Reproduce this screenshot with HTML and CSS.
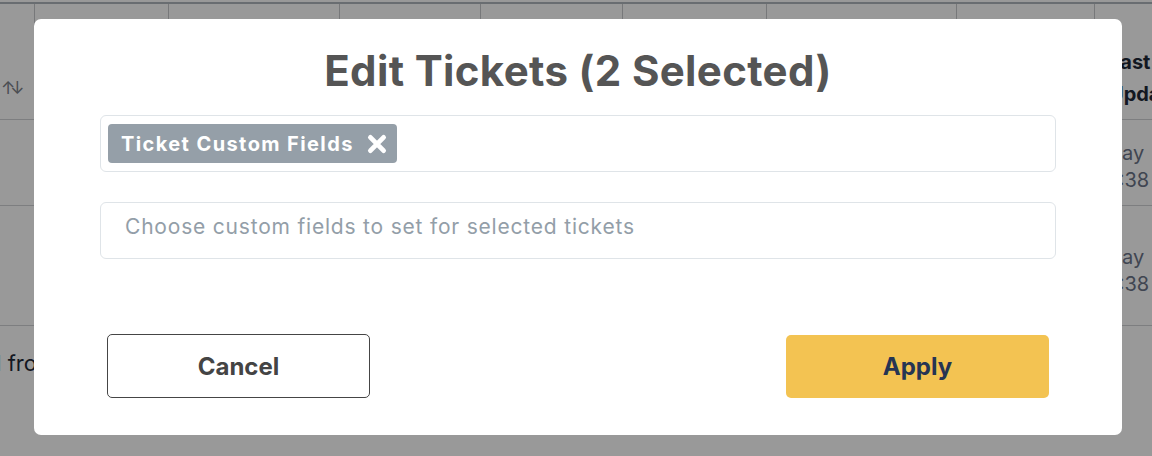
FILE: index.html
```html
<!DOCTYPE html>
<html>
<head>
<meta charset="utf-8">
<link rel="stylesheet" href="styles.css">
</head>
<body>
<div class="page">
  <div class="table">
    <div class="row head">
      <div class="cell c0"><span class="sort">↑↓</span></div>
      <div class="cell c1"></div>
      <div class="cell c2"></div>
      <div class="cell c3"></div>
      <div class="cell c4"></div>
      <div class="cell c5"></div>
      <div class="cell c6"></div>
      <div class="cell c7"></div>
      <div class="cell c8"><span class="th">Last<br>Updated</span></div>
    </div>
    <div class="row body r1">
      <div class="cell wide"></div>
      <div class="cell c8"><span class="td"><span class="m">May</span><br>10:38</span></div>
    </div>
    <div class="row body r2">
      <div class="cell wide"></div>
      <div class="cell c8"><span class="td"><span class="m">May</span><br>10:38</span></div>
    </div>
  </div>
  <div class="footer"><span class="foot-text">d from</span></div>
</div>

<div class="overlay">
  <div class="modal">
    <h1 class="title">Edit Tickets (2 Selected)</h1>
    <div class="field chips">
      <span class="chip">Ticket Custom Fields
        <svg class="chip-x" viewBox="0 0 20 20" width="22" height="22"><path d="M4 4 L16 16 M16 4 L4 16" stroke="#fff" stroke-width="4.4" stroke-linecap="round"/></svg>
      </span>
    </div>
    <div class="field select">
      <span class="placeholder">Choose custom fields to set for selected tickets</span>
    </div>
    <div class="actions">
      <button class="btn cancel">Cancel</button>
      <button class="btn apply">Apply</button>
    </div>
  </div>
</div>
</body>
</html>
```

FILE: styles.css
```css
* { box-sizing: border-box; }
html, body { margin: 0; padding: 0; }
body {
  width: 1152px;
  height: 456px;
  overflow: hidden;
  background: #ffffff;
  font-family: "Inter", "Lato", "Liberation Sans", sans-serif;
}

.page { padding-top: 2px; }

.table { border-top: 2px solid #b0b6bd; }

.row { display: flex; }
.row.head { height: 116px; border-bottom: 1px solid #d0d3d6; }
.row.body { border-bottom: 1px solid #d0d3d6; }
.row.r1 { height: 86px; }
.row.r2 { height: 120px; }

.cell { flex: none; position: relative; }
.head .cell { border-left: 1px solid #c6c8cb; }
.head .c0 { border-left: none; width: 34px; padding: 72px 0 0 1px; }
.c1 { width: 134px; }
.c2 { width: 171px; }
.c3 { width: 141px; }
.c4 { width: 142px; }
.c5 { width: 144px; }
.c6 { width: 190px; }
.c7 { width: 138px; }
.c8 { width: 58px; padding-left: 14px; white-space: nowrap; overflow: hidden; }
.body .c8 { padding-left: 4px; }
.wide { width: 1094px; }

.sort { display: block; font-size: 17px; line-height: 24px; color: #7b8088; letter-spacing: -5px; }
.th {
  display: block;
  padding-top: 42px;
  font-weight: 700;
  font-size: 20px;
  line-height: 32px;
  color: #1f2937;
}
.td {
  display: block;
  padding-top: 20px;
  font-size: 20px;
  line-height: 27px;
  color: #6b7488;
}
.td .m { margin-left: 6px; }
.r2 .td { padding-top: 38px; }

.footer { padding-top: 24px; }
.foot-text {
  display: inline-block;
  margin-left: -12px;
  font-size: 22px;
  color: #1f2937;
}

.overlay {
  position: fixed;
  inset: 0;
  background: rgba(0, 0, 0, 0.4);
  padding: 19px 30px 21px 34px;
}

.modal {
  width: 1088px;
  height: 416px;
  background: #ffffff;
  border-radius: 7px;
  padding: 24px 66px 0 66px;
  display: flex;
  flex-direction: column;
}

.title {
  margin: 0;
  text-align: center;
  font-size: 42px;
  line-height: 56px;
  font-weight: 700;
  letter-spacing: 0.35px;
  color: #555555;
}

.field {
  border: 1px solid #dfe4e8;
  border-radius: 6px;
  height: 57px;
  display: flex;
  align-items: center;
}
.chips { margin-top: 16px; padding-left: 7px; }
.select { margin-top: 30px; padding-left: 24px; }

.chip {
  display: inline-flex;
  align-items: center;
  gap: 12px;
  height: 39px;
  padding: 0 9px 0 13px;
  border-radius: 4px;
  background: #959fa8;
  color: #ffffff;
  font-weight: 700;
  font-size: 20px;
  letter-spacing: 1.4px;
}
.chip-x { display: block; width: 22px; height: 22px; }

.placeholder {
  font-size: 21px;
  color: #939ea8;
  letter-spacing: 0.8px;
  margin-top: -9px;
}

.actions {
  margin-top: 75px;
  display: flex;
  justify-content: space-between;
  padding: 0 7px;
}

.btn {
  width: 263px;
  height: 64px;
  border-radius: 5px;
  font-family: inherit;
  font-size: 24px;
  font-weight: 700;
  cursor: pointer;
}
.cancel {
  background: #ffffff;
  border: 1px solid #454545;
  color: #444444;
}
.apply {
  background: #f3c352;
  border: none;
  color: #263553;
  margin-top: 1px;
  height: 63px;
}
```
